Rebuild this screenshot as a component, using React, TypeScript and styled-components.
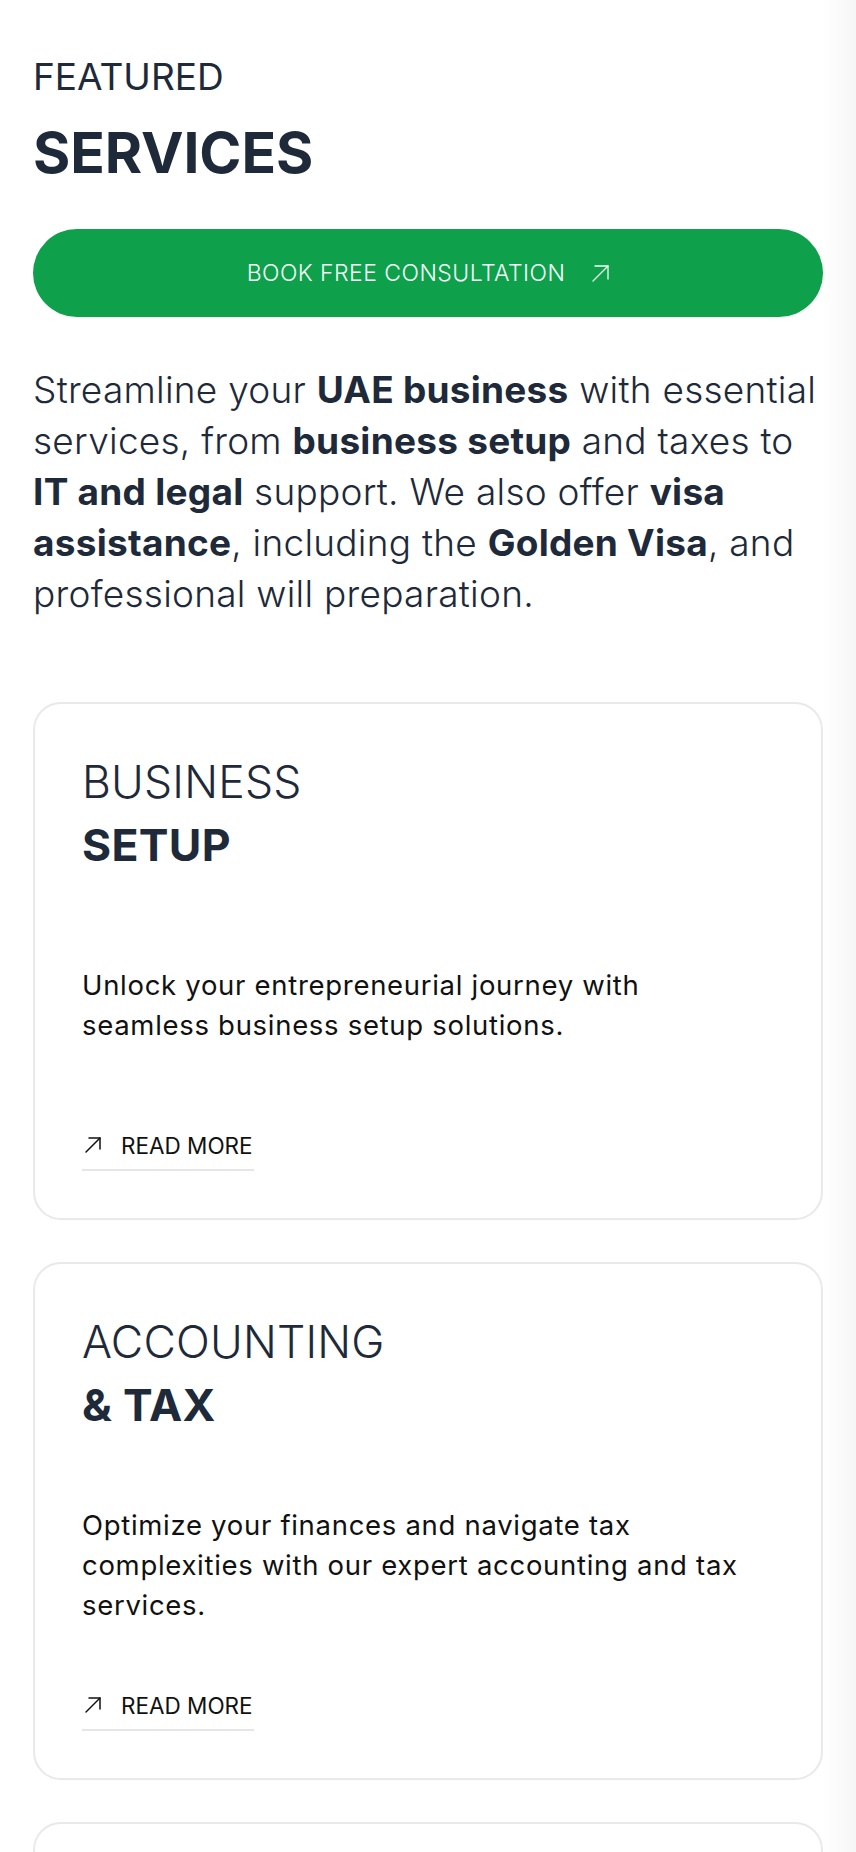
import React from "react";
import styled, { createGlobalStyle } from "styled-components";

const GlobalStyle = createGlobalStyle`
  html, body {
    margin: 0;
    padding: 0;
    background: #ffffff;
  }
  body {
    font-family: "Inter", "Noto Sans", sans-serif;
    color: #1e2939;
    -webkit-font-smoothing: antialiased;
  }
  * { box-sizing: border-box; }
`;

const Page = styled.section`
  position: relative;
  padding: 55px 33px 0;
  min-height: 1852px;
  overflow: hidden;
`;

const SectionTitle = styled.h2`
  margin: 0;
  display: flex;
  flex-direction: column;
  gap: 20px;
  color: #1e2939;
`;

const TitleLight = styled.span`
  font-size: 37px;
  line-height: 44px;
  font-weight: 400;
  letter-spacing: 0;
`;

const TitleBold = styled.span`
  font-size: 57px;
  line-height: 68px;
  font-weight: 700;
  letter-spacing: -0.1px;
`;

const CtaButton = styled.a`
  margin-top: 42px;
  height: 88px;
  border-radius: 44px;
  background: #0ea04b;
  color: #f4fff8;
  display: flex;
  align-items: center;
  justify-content: center;
  gap: 27px;
  text-decoration: none;
  font-size: 23px;
  font-weight: 300;
  letter-spacing: 0.45px;
  cursor: pointer;
`;

const Intro = styled.p`
  margin: 47px 0 0;
  max-width: 790px;
  font-size: 37px;
  line-height: 51px;
  font-weight: 300;
  letter-spacing: 0.25px;
  color: #1e2939;
`;

const Strong = styled.strong`
  font-weight: 700;
  color: #1e2939;
`;

const CardList = styled.div`
  margin-top: 83px;
  display: flex;
  flex-direction: column;
  gap: 42px;
`;

const Card = styled.article`
  height: 518px;
  border: 2px solid #e9e9eb;
  border-radius: 28px;
  padding: 47px;
  display: flex;
  flex-direction: column;
  justify-content: space-between;
  background: #ffffff;
`;

const CardTitle = styled.h3`
  margin: 0;
  display: flex;
  flex-direction: column;
  font-size: 44.5px;
  line-height: 63px;
  color: #1e2939;
`;

const CardTitleLight = styled.span`
  font-weight: 300;
  letter-spacing: 0.2px;
`;

const CardTitleBold = styled.span`
  font-weight: 700;
  letter-spacing: 0.3px;
`;

const CardText = styled.p`
  margin: 0;
  max-width: 670px;
  font-size: 27.5px;
  line-height: 40px;
  font-weight: 400;
  letter-spacing: 0.7px;
  color: #111111;
`;

const ReadMore = styled.a`
  align-self: flex-start;
  display: inline-flex;
  align-items: center;
  gap: 20px;
  padding: 0 1px 10px 0;
  border-bottom: 2px solid #e6e6e6;
  font-size: 22.5px;
  line-height: 27px;
  font-weight: 400;
  color: #111111;
  text-decoration: none;
  cursor: pointer;
`;

const ArrowIcon = styled.svg<{ $size: number }>`
  width: ${(p) => p.$size}px;
  height: ${(p) => p.$size}px;
  flex: none;
  overflow: visible;
`;

const ReadMoreArrow = styled(ArrowIcon)`
  margin-left: 3px;
  margin-top: -2px;
`;

const EdgeShade = styled.div`
  position: fixed;
  top: 0;
  right: 0;
  width: 34px;
  height: 100%;
  pointer-events: none;
  background: linear-gradient(to right, rgba(0, 0, 0, 0), rgba(0, 0, 0, 0.035));
`;

function Arrow({ size, stroke, width, head }: { size: number; stroke: string; width: number; head: number }) {
  const s = size - 1;
  return (
    <ArrowIcon
      $size={size}
      viewBox={`0 0 ${size} ${size}`}
      fill="none"
      stroke={stroke}
      strokeWidth={width}
      strokeLinecap="round"
      strokeLinejoin="round"
    >
      <path d={`M1 ${s} L${s} 1`} />
      <path d={`M${s - head} 1 H${s} V${1 + head}`} />
    </ArrowIcon>
  );
}

function SmallArrow() {
  return (
    <ReadMoreArrow
      $size={16}
      viewBox="0 0 16 16"
      fill="none"
      stroke="#111111"
      strokeWidth={1.5}
      strokeLinecap="round"
      strokeLinejoin="round"
    >
      <path d="M1 15 L15 1" />
      <path d="M4 1 H15 V12" />
    </ReadMoreArrow>
  );
}

const services = [
  {
    light: "BUSINESS",
    bold: "SETUP",
    text: "Unlock your entrepreneurial journey with seamless business setup solutions.",
  },
  {
    light: "ACCOUNTING",
    bold: "& TAX",
    text: "Optimize your finances and navigate tax complexities with our expert accounting and tax services.",
  },
  {
    light: "IT",
    bold: "SERVICES",
    text: "Empower your business with reliable IT infrastructure, support and digital solutions.",
  },
];

export default function App() {
  return (
    <>
      <GlobalStyle />
      <Page>
        <SectionTitle>
          <TitleLight>FEATURED</TitleLight>
          <TitleBold>SERVICES</TitleBold>
        </SectionTitle>

        <CtaButton>
          <span>BOOK FREE CONSULTATION</span>
          <Arrow size={17} stroke="#f4fff8" width={1.3} head={13} />
        </CtaButton>

        <Intro>
          Streamline your <Strong>UAE business</Strong> with essential services, from{" "}
          <Strong>business setup</Strong> and taxes to <Strong>IT and legal</Strong> support. We also offer{" "}
          <Strong>visa</Strong> <Strong>assistance</Strong>, including the <Strong>Golden Visa</Strong>, and
          professional will preparation.
        </Intro>

        <CardList>
          {services.map((s) => (
            <Card key={s.light}>
              <CardTitle>
                <CardTitleLight>{s.light}</CardTitleLight>
                <CardTitleBold>{s.bold}</CardTitleBold>
              </CardTitle>
              <CardText>{s.text}</CardText>
              <ReadMore>
                <SmallArrow />
                <span>READ MORE</span>
              </ReadMore>
            </Card>
          ))}
        </CardList>
        <EdgeShade />
      </Page>
    </>
  );
}
